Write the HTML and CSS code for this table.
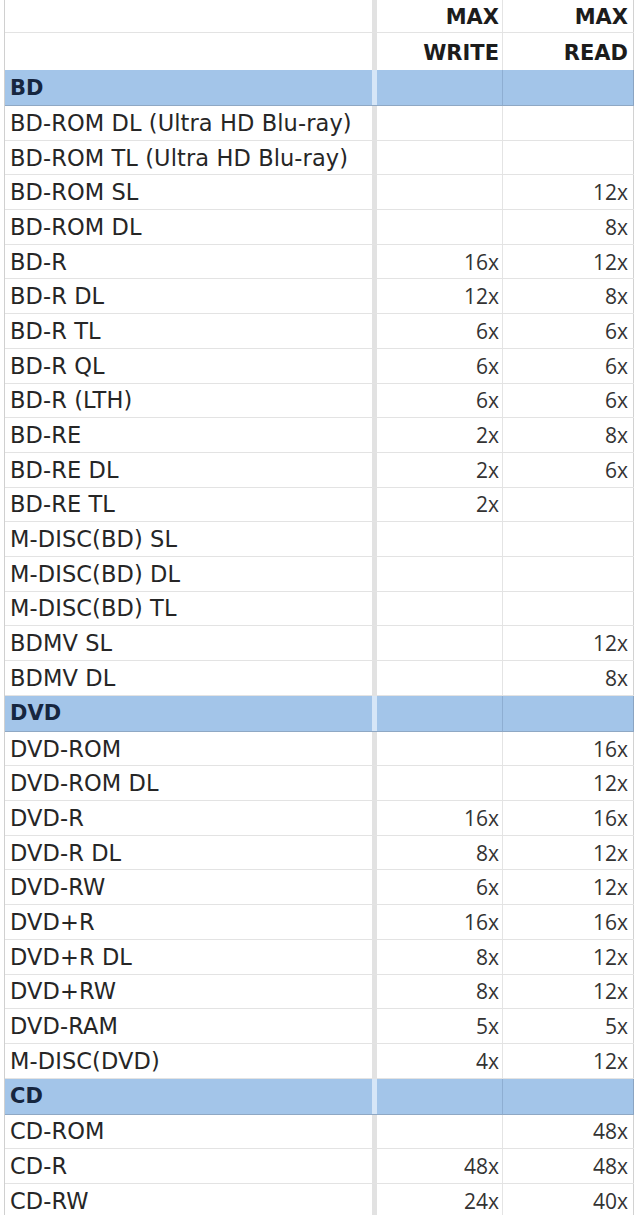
FILE: index.html
```html
<!DOCTYPE html>
<html>
<head>
<meta charset="utf-8">
<link rel="stylesheet" href="styles.css">
</head>
<body>
<div class="sheet">
  <div class="row head h1"><div class="c name"></div><div class="c w">MAX</div><div class="c r">MAX</div></div>
  <div class="row head h2"><div class="c name"></div><div class="c w">WRITE</div><div class="c r">READ</div></div>

  <div class="row sec"><div class="c name">BD</div><div class="c w"></div><div class="c r"></div></div>
  <div class="row"><div class="c name">BD-ROM DL (Ultra HD Blu-ray)</div><div class="c w"></div><div class="c r"></div></div>
  <div class="row"><div class="c name">BD-ROM TL (Ultra HD Blu-ray)</div><div class="c w"></div><div class="c r"></div></div>
  <div class="row"><div class="c name">BD-ROM SL</div><div class="c w"></div><div class="c r">12x</div></div>
  <div class="row"><div class="c name">BD-ROM DL</div><div class="c w"></div><div class="c r">8x</div></div>
  <div class="row"><div class="c name">BD-R</div><div class="c w">16x</div><div class="c r">12x</div></div>
  <div class="row"><div class="c name">BD-R DL</div><div class="c w">12x</div><div class="c r">8x</div></div>
  <div class="row"><div class="c name">BD-R TL</div><div class="c w">6x</div><div class="c r">6x</div></div>
  <div class="row"><div class="c name">BD-R QL</div><div class="c w">6x</div><div class="c r">6x</div></div>
  <div class="row"><div class="c name">BD-R (LTH)</div><div class="c w">6x</div><div class="c r">6x</div></div>
  <div class="row"><div class="c name">BD-RE</div><div class="c w">2x</div><div class="c r">8x</div></div>
  <div class="row"><div class="c name">BD-RE DL</div><div class="c w">2x</div><div class="c r">6x</div></div>
  <div class="row"><div class="c name">BD-RE TL</div><div class="c w">2x</div><div class="c r"></div></div>
  <div class="row"><div class="c name">M-DISC(BD) SL</div><div class="c w"></div><div class="c r"></div></div>
  <div class="row"><div class="c name">M-DISC(BD) DL</div><div class="c w"></div><div class="c r"></div></div>
  <div class="row"><div class="c name">M-DISC(BD) TL</div><div class="c w"></div><div class="c r"></div></div>
  <div class="row"><div class="c name">BDMV SL</div><div class="c w"></div><div class="c r">12x</div></div>
  <div class="row"><div class="c name">BDMV DL</div><div class="c w"></div><div class="c r">8x</div></div>

  <div class="row sec"><div class="c name">DVD</div><div class="c w"></div><div class="c r"></div></div>
  <div class="row"><div class="c name">DVD-ROM</div><div class="c w"></div><div class="c r">16x</div></div>
  <div class="row"><div class="c name">DVD-ROM DL</div><div class="c w"></div><div class="c r">12x</div></div>
  <div class="row"><div class="c name">DVD-R</div><div class="c w">16x</div><div class="c r">16x</div></div>
  <div class="row"><div class="c name">DVD-R DL</div><div class="c w">8x</div><div class="c r">12x</div></div>
  <div class="row"><div class="c name">DVD-RW</div><div class="c w">6x</div><div class="c r">12x</div></div>
  <div class="row"><div class="c name">DVD+R</div><div class="c w">16x</div><div class="c r">16x</div></div>
  <div class="row"><div class="c name">DVD+R DL</div><div class="c w">8x</div><div class="c r">12x</div></div>
  <div class="row"><div class="c name">DVD+RW</div><div class="c w">8x</div><div class="c r">12x</div></div>
  <div class="row"><div class="c name">DVD-RAM</div><div class="c w">5x</div><div class="c r">5x</div></div>
  <div class="row"><div class="c name">M-DISC(DVD)</div><div class="c w">4x</div><div class="c r">12x</div></div>

  <div class="row sec"><div class="c name">CD</div><div class="c w"></div><div class="c r"></div></div>
  <div class="row"><div class="c name">CD-ROM</div><div class="c w"></div><div class="c r">48x</div></div>
  <div class="row"><div class="c name">CD-R</div><div class="c w">48x</div><div class="c r">48x</div></div>
  <div class="row"><div class="c name">CD-RW</div><div class="c w">24x</div><div class="c r">40x</div></div>
</div>
</body>
</html>
```

FILE: styles.css
```css
html, body {
  margin: 0;
  padding: 0;
  background: #ffffff;
}

.sheet {
  margin-left: 4px;
  width: 629px;
  border-left: 1px solid #d0d0d0;
  font-family: "DejaVu Sans", "Open Sans", sans-serif;
  color: #222222;
}

.row {
  display: grid;
  grid-template-columns: 372px 126px 131px;
  height: 34.7px;
  box-sizing: border-box;
  border-bottom: 1px solid #e3e3e3;
}

.row.h1 { height: 33px; }
.row.h2 { height: 37px; border-bottom: none; }

.c {
  display: flex;
  align-items: center;
  box-sizing: border-box;
  overflow: hidden;
  white-space: nowrap;
}

.name {
  padding-left: 5px;
  font-size: 22.5px;
  letter-spacing: 0.1px;
  color: #262626;
  border-right: 5px solid #e2e2e2;
}

.w, .r {
  justify-content: flex-end;
  font-family: "Open Sans", "Noto Sans", sans-serif;
  font-size: 21px;
  color: #333333;
  border-right: 1px solid #e4e4e4;
}

.w { padding-right: 3px; }
.r { padding-right: 5px; border-right-color: #d2d2d2; }

.head .w, .head .r {
  font-family: "DejaVu Sans", sans-serif;
  font-size: 21px;
  font-weight: 700;
  color: #1c1c1c;
  padding-top: 2px;
}

.sec {
  height: 36px;
  background: #a3c5e9;
  border-bottom: 1px solid #8fa8c4;
}

.sec .name {
  font-weight: 700;
  color: #16263f;
  font-size: 21px;
  letter-spacing: 0;
  border-right-color: #d6e6f7;
}

.sec .w { border-right-color: #8eaed2; }
.sec .r { border-right-color: #8aa4c2; }
```
